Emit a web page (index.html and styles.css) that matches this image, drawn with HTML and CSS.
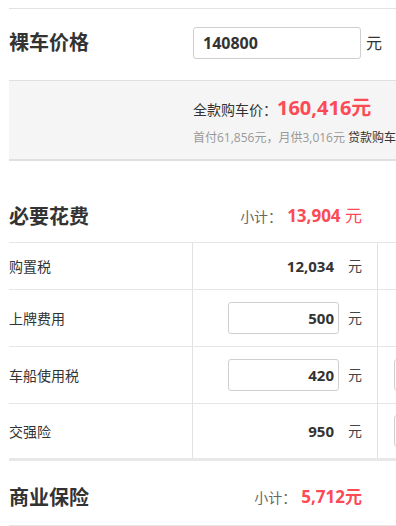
FILE: index.html
```html
<!DOCTYPE html>
<html lang="zh-CN">
<head>
<meta charset="utf-8">
<title>购车计算</title>
<link rel="stylesheet" href="styles.css">
</head>
<body>
<div class="page">
  <div class="price-row">
    <div class="title">裸车价格</div>
    <div class="price-field">
      <input class="inp inp-left" type="text" value="140800">
      <span class="unit unit-dark">元</span>
    </div>
  </div>

  <div class="summary">
    <div class="sum-line"><span class="sum-label">全款购车价：</span><span class="sum-total">160,416元</span></div>
    <div class="sum-sub">首付61,856元，月供3,016元 <span class="loan">贷款购车</span></div>
  </div>

  <div class="sec-head sec-first">
    <div class="title">必要花费</div>
    <div class="subtotal"><span class="sub-label">小计：</span><b class="sub-num">13,904</b><span class="sub-unit">&nbsp;元</span></div>
    <div></div>
  </div>

  <div class="table">
    <div class="row row-short">
      <div class="cell label">购置税</div>
      <div class="cell val-cell"><span class="val">12,034</span><span class="unit">元</span></div>
      <div class="cell extra"></div>
    </div>
    <div class="row">
      <div class="cell label">上牌费用</div>
      <div class="cell val-cell"><input class="inp inp-right" type="text" value="500"><span class="unit">元</span></div>
      <div class="cell extra"></div>
    </div>
    <div class="row">
      <div class="cell label">车船使用税</div>
      <div class="cell val-cell"><input class="inp inp-right" type="text" value="420"><span class="unit">元</span></div>
      <div class="cell extra"><input class="inp inp-right" type="text" value=""></div>
    </div>
    <div class="row row-last">
      <div class="cell label">交强险</div>
      <div class="cell val-cell"><span class="val">950</span><span class="unit">元</span></div>
      <div class="cell extra"><input class="inp inp-right" type="text" value=""></div>
    </div>
  </div>

  <div class="sec-head sec-second">
    <div class="title">商业保险</div>
    <div class="subtotal"><span class="sub-label">小计：</span><b class="sub-num">5,712元</b></div>
    <div></div>
  </div>

  <div class="table table-bottom">
    <div class="row row-short">
      <div class="cell label"></div>
      <div class="cell val-cell"></div>
      <div class="cell extra"></div>
    </div>
  </div>
</div>
</body>
</html>
```

FILE: styles.css
```css
html, body {
  margin: 0;
  padding: 0;
  background: #fff;
  overflow: hidden;
}

body {
  font-family: "Open Sans", "Noto Sans CJK SC", sans-serif;
  color: #333;
  font-size: 14px;
}

.page {
  margin-left: 9px;
  padding-top: 8px;
  width: 700px;
}

.title {
  font-size: 20px;
  font-weight: bold;
  color: #333;
  line-height: 30px;
}

.price-row {
  display: grid;
  grid-template-columns: 184px 1fr;
  align-items: center;
  border-top: 1px solid #e2e2e2;
  padding: 18px 0 21px;
}

.price-field {
  display: flex;
  align-items: center;
}

.inp {
  box-sizing: border-box;
  height: 32px;
  border: 1px solid #cfcfcf;
  border-radius: 3px;
  background: #fff;
  font-family: "Open Sans", "Noto Sans CJK SC", sans-serif;
  font-weight: bold;
  color: #333;
  outline: none;
  margin: 0;
}

.inp-left {
  width: 168px;
  padding: 0 9px;
  font-size: 16px;
  text-align: left;
}

.inp-right {
  width: 111px;
  padding: 0 4px;
  font-size: 15px;
  text-align: right;
}

.unit {
  font-size: 14px;
  color: #444;
  margin-left: 9px;
  line-height: 20px;
}

.unit-dark {
  font-size: 16px;
  color: #333;
  margin-left: 5px;
}

.summary {
  background: #f5f5f5;
  border-top: 1px solid #e0e0e0;
  border-bottom: 2px solid #e0e0e0;
  padding: 13px 0 11px 184px;
}

.sum-line {
  line-height: 28px;
  height: 28px;
  white-space: nowrap;
}

.sum-label {
  font-size: 14px;
  color: #333;
}

.sum-total {
  font-size: 20px;
  font-weight: bold;
  color: #fd4a55;
}

.sum-sub {
  margin-top: 6px;
  line-height: 20px;
  font-size: 12px;
  color: #999;
  white-space: nowrap;
}

.loan {
  color: #333;
}

.sec-head {
  display: grid;
  grid-template-columns: 184px 185px 1fr;
  align-items: center;
}

.sec-first {
  padding: 40px 0 10px;
}

.sec-second {
  padding: 21px 0 12px;
}

.subtotal {
  grid-column: 2;
  text-align: right;
  padding-right: 16px;
  white-space: nowrap;
  line-height: 30px;
}

.sub-label {
  font-size: 14px;
  color: #666;
  margin-right: 5px;
}

.sub-num {
  font-size: 17px;
  font-weight: bold;
  color: #fd4a55;
}

.sub-unit {
  font-size: 17px;
  color: #fd4a55;
}

.table {
  border-top: 1px solid #e6e6e6;
}

.row {
  display: grid;
  grid-template-columns: 184px 185px 1fr;
  border-bottom: 1px solid #e6e6e6;
  min-height: 56px;
}

.row-short {
  min-height: 46px;
}

.row-last {
  min-height: 54px;
  border-bottom: 3px solid #e8e8e8;
}

.cell {
  display: flex;
  align-items: center;
  border-right: 1px solid #e2e2e2;
}

.cell.extra {
  border-right: none;
  padding-left: 16px;
}

.label {
  font-size: 14px;
  color: #333;
}

.val-cell {
  justify-content: flex-end;
  padding-right: 15px;
}

.val {
  box-sizing: border-box;
  width: 111px;
  padding-right: 5px;
  text-align: right;
  font-size: 15px;
  font-weight: bold;
  color: #333;
}
```
